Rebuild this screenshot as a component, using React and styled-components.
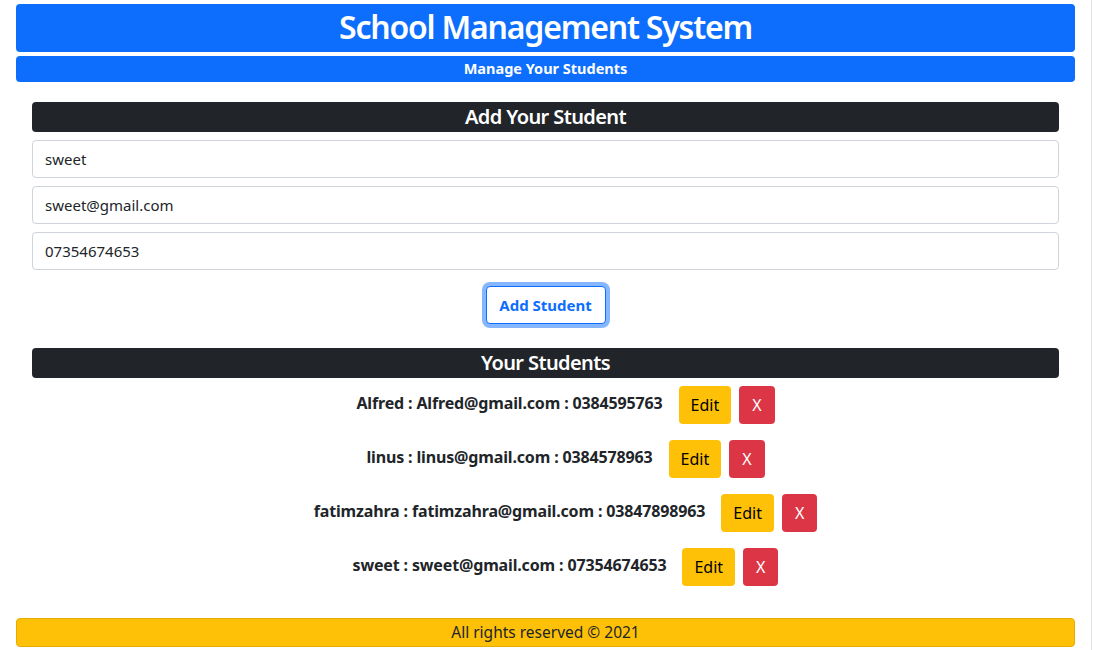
import React, { useState } from "react";
import styled, { createGlobalStyle } from "styled-components";

const GlobalStyle = createGlobalStyle`
  * { box-sizing: border-box; }
  body {
    margin: 0;
    background: #fff;
    color: #212529;
    font-family: "Noto Sans", "Open Sans", sans-serif;
  }
`;

const students = [
  { name: "Alfred", email: "Alfred@gmail.com", phone: "0384595763" },
  { name: "linus", email: "linus@gmail.com", phone: "0384578963" },
  { name: "fatimzahra", email: "fatimzahra@gmail.com", phone: "03847898963" },
  { name: "sweet", email: "sweet@gmail.com", phone: "07354674653" },
];

export default function App() {
  const [form] = useState({
    name: "sweet",
    email: "sweet@gmail.com",
    phone: "07354674653",
  });

  return (
    <Page>
      <GlobalStyle />
      <Header>School Management System</Header>
      <SubHeader>Manage Your Students</SubHeader>
      <Main>
        <SectionTitle>Add Your Student</SectionTitle>
        <Form>
          <Input defaultValue={form.name} />
          <Input defaultValue={form.email} />
          <Input defaultValue={form.phone} />
          <AddButton type="button">Add Student</AddButton>
        </Form>
        <SectionTitle>Your Students</SectionTitle>
        <List>
          {students.map((s) => (
            <Row key={s.email}>
              <Info>
                {s.name} : {s.email} : {s.phone}
              </Info>
              <Button variant="edit">Edit</Button>
              <Button variant="delete">X</Button>
            </Row>
          ))}
        </List>
      </Main>
      <Footer>All rights reserved © 2021</Footer>
    </Page>
  );
}

const Page = styled.div`
  width: 1092px;
  min-height: 650px;
  border-right: 1px solid #e3e3e3;
  padding: 4px 16px 0;
  display: flex;
  flex-direction: column;
`;

const Header = styled.h1`
  margin: 0;
  height: 48px;
  background: #0d6efd;
  color: #fff;
  border-radius: 4px;
  font-size: 32px;
  font-weight: 600;
  letter-spacing: -1.2px;
  line-height: 46px;
  text-align: center;
`;

const SubHeader = styled.div`
  margin-top: 4px;
  height: 26px;
  background: #0d6efd;
  color: #fff;
  border-radius: 4px;
  font-size: 14.5px;
  font-weight: 700;
  line-height: 25px;
  text-align: center;
`;

const Main = styled.main`
  padding: 20px 16px 0;
  display: flex;
  flex-direction: column;
`;

const SectionTitle = styled.h4`
  margin: 0;
  height: 30px;
  background: #212529;
  color: #fff;
  border-radius: 4px;
  font-size: 20px;
  font-weight: 600;
  letter-spacing: -0.6px;
  line-height: 29px;
  text-align: center;
`;

const Form = styled.div`
  padding: 8px 0 24px;
  display: flex;
  flex-direction: column;
  gap: 8px;
`;

const Input = styled.input`
  height: 38px;
  padding: 0 12px;
  border: 1px solid #ced4da;
  border-radius: 4px;
  font-family: inherit;
  font-size: 15px;
  color: #212529;
  outline: none;
`;

const AddButton = styled.button`
  align-self: center;
  margin-top: 8px;
  width: 120px;
  height: 38px;
  background: #fff;
  color: #0d6efd;
  border: 1px solid #0d6efd;
  border-radius: 4px;
  box-shadow: 0 0 0 4px rgba(13, 110, 253, 0.5);
  font-family: inherit;
  font-size: 15px;
  font-weight: 700;
  cursor: pointer;
`;

const List = styled.ul`
  list-style: none;
  margin: 8px 0 16px;
  padding-left: 40px;
`;

const Row = styled.li`
  display: flex;
  justify-content: center;
  align-items: center;
  margin-bottom: 16px;
`;

const Info = styled.span`
  font-size: 16px;
  font-weight: 700;
  letter-spacing: -0.15px;
  margin-right: 16px;
  margin-top: -4px;
`;

const Button = styled.button`
  height: 38px;
  padding: 0 ${(p) => (p.variant === "edit" ? "12px" : "13px")};
  border: none;
  border-radius: 4px;
  font-family: inherit;
  font-size: 16px;
  cursor: pointer;
  background: ${(p) => (p.variant === "edit" ? "#ffc107" : "#dc3545")};
  color: ${(p) => (p.variant === "edit" ? "#000" : "#fff")};
  margin-right: ${(p) => (p.variant === "edit" ? "8px" : "0")};
`;

const Footer = styled.footer`
  height: 29px;
  background: #ffc107;
  border: 1px solid #e6ac00;
  border-radius: 4px;
  font-size: 15.5px;
  line-height: 27px;
  text-align: center;
  color: #212529;
`;
